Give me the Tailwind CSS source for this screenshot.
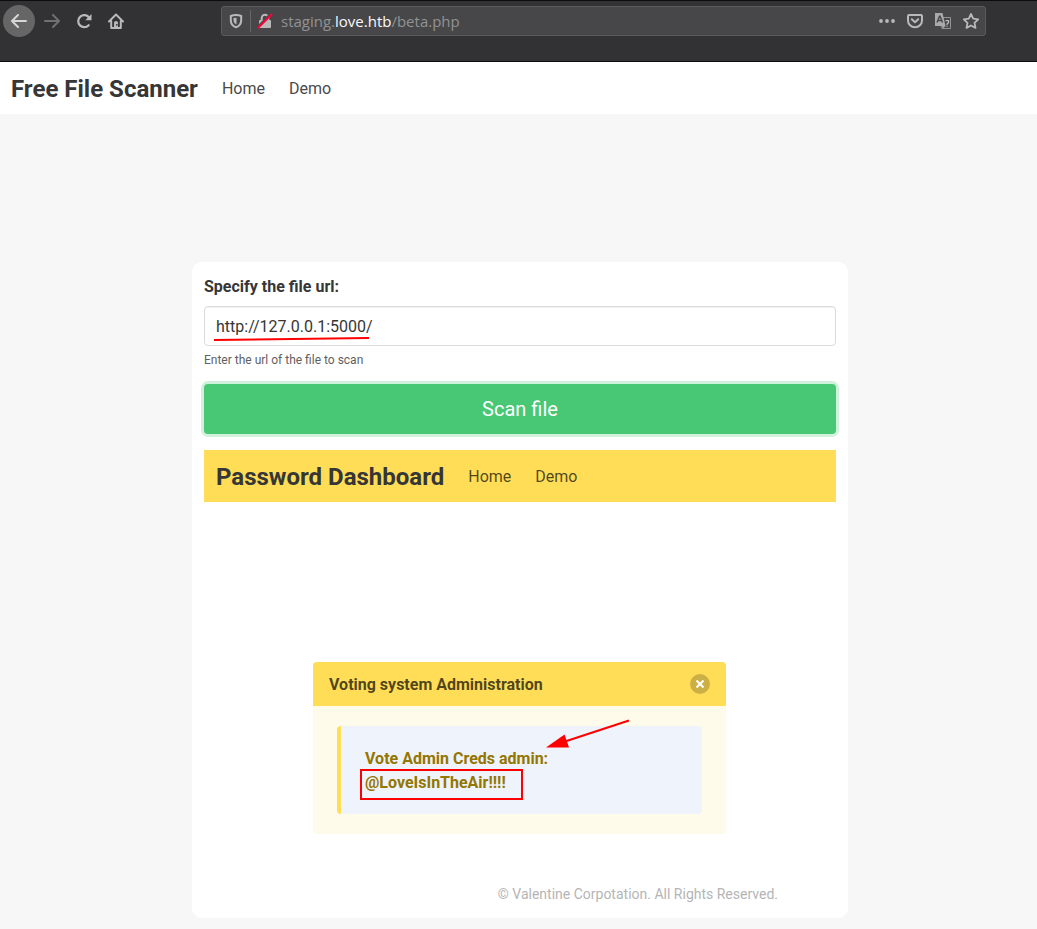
<!DOCTYPE html>
<html lang="en">
<head>
<meta charset="utf-8">
<meta name="viewport" content="width=device-width, initial-scale=1">
<title>Free File Scanner</title>
<script src="https://cdn.jsdelivr.net/npm/@tailwindcss/browser@4"></script>
</head>
<body class="min-h-screen bg-[#f7f7f7] font-['Roboto',sans-serif] text-base text-[#363636]">

<!-- Browser toolbar -->
<div class="flex h-[62px] items-start border-y border-[#0c0c0d] bg-[#323234] pt-1 pr-[51px] pl-[3px] text-[#b9b9ba]">
  <div class="flex w-[218px] shrink-0 items-center">
    <button type="button" aria-label="Back" class="flex size-8 items-center justify-center rounded-full bg-[#666667] text-[#d6d6d6]">
      <svg class="size-4" viewBox="0 0 16 16" fill="none" stroke="currentColor" stroke-width="2" stroke-linecap="round" stroke-linejoin="round"><path d="M15 8H1.500M7 2L1 8l6 6"/></svg>
    </button>
    <button type="button" aria-label="Forward" class="flex size-8 items-center justify-center text-[#707071]">
      <svg class="ml-0.5 size-4 shrink-0" viewBox="0 0 16 16" fill="none" stroke="currentColor" stroke-width="2" stroke-linecap="round" stroke-linejoin="round"><path d="M1 8h13.500M9 2l6 6-6 6"/></svg>
    </button>
    <button type="button" aria-label="Reload" class="flex size-8 items-center justify-center">
      <svg class="ml-0.5 size-4 shrink-0" viewBox="0 0 16 16" fill="none" stroke="currentColor" stroke-width="2.200" stroke-linecap="round"><path d="M12.700 12.200A6 6 0 1 1 13 4.500"/><path d="M15.500 1v6.200H9.300z" fill="currentColor" stroke="none"/></svg>
    </button>
    <button type="button" aria-label="Home page" class="flex size-8 items-center justify-center">
      <svg class="ml-0.5 size-4 shrink-0" viewBox="0 0 16 16" fill="none" stroke="currentColor" stroke-width="2" stroke-linecap="round" stroke-linejoin="round"><path d="M1 8.500L8 1.500l7 7M3.200 8v7h9.600V8"/><path d="M6 15V9.500Q6 8 8 8t2 1.500V15z" stroke="none" fill="currentColor"/><circle cx="8.800" cy="11.800" r=".9" fill="#323234" stroke="none"/></svg>
    </button>
  </div>
  <div class="mt-px flex h-[30px] min-w-0 flex-1 items-center rounded-[3px] border border-[#5b5b5d] bg-[#474749] pr-1.5 pl-1.5">
    <svg class="size-4 shrink-0" viewBox="0 0 16 16" fill="none" stroke="currentColor" stroke-width="2" stroke-linejoin="round"><path d="M8 2C10 2 12 2.500 13.200 3v4.200C13.200 11 11 13.300 8 14.200 5 13.300 2.800 11 2.800 7.200V3C4 2.500 6 2 8 2z"/><path d="M8.500 4.700v6.800C6.600 10.500 5.500 9.200 5.500 7V5z" fill="currentColor" stroke="none"/></svg>
    <span class="mx-1.5 h-[22px] w-px bg-[#666668]"></span>
    <svg class="size-4 shrink-0" viewBox="0 0 16 16" fill="none"><path d="M4.700 7V5a3.300 3.300 0 0 1 6.600 0v2" stroke="#b9b9ba" stroke-width="2"/><rect x="2" y="7" width="12" height="8" rx="1" fill="#b9b9ba"/><path d="M1 13.500L13.500 1" stroke="#474749" stroke-width="2"/><path d="M1.500 14.500L14.500 1.500" stroke="#ff0039" stroke-width="2" stroke-linecap="round"/></svg>
    <p class="ml-2 min-w-0 flex-1 truncate font-['Open_Sans',sans-serif] text-[15px] leading-6 text-[#929293]">staging.<span class="text-[#f9f9fa]">love.htb</span>/beta.php</p>
    <div class="flex shrink-0 items-center gap-3">
      <button type="button" aria-label="Page actions"><svg class="size-4" viewBox="0 0 16 16" fill="currentColor"><circle cx="2" cy="8" r="1.900"/><circle cx="8" cy="8" r="1.900"/><circle cx="14" cy="8" r="1.900"/></svg></button>
      <button type="button" aria-label="Save to Pocket"><svg class="size-4" viewBox="0 0 16 16" fill="none" stroke="currentColor" stroke-width="2" stroke-linecap="round" stroke-linejoin="round"><path d="M2 2h12q1 0 1 1v4.500a7 6.800 0 0 1-14 0V3q0-1 1-1z"/><path d="M4.800 6.300L8 9.300l3.200-3"/></svg></button>
      <button type="button" aria-label="Translate"><svg class="size-4" viewBox="0 0 16 16" fill="none"><path d="M8 4.500h7.500v11H7l-1-3" stroke="#939395"/><path d="M0 0h7.500L10.500 13H0z" fill="#a9a9aa"/><path d="M7 13h3.500L8 15.500z" fill="#a9a9aa"/><path d="M2 9.500L4.500 3.200h.6l2.400 6.300M3 7.500h3.800" stroke="#474749" stroke-width="1.400"/><path d="M10.500 7.700h3v2l-1.500 1.300v1m0 .8v1" stroke="#b9b9ba" stroke-width="1.300"/></svg></button>
      <button type="button" aria-label="Bookmark"><svg class="size-4" viewBox="0 0 16 16" fill="none" stroke="currentColor" stroke-width="1.800" stroke-linejoin="round"><path d="M8 1l2.200 4.700 5 .6-3.700 3.500 1 5.100L8 12.500l-4.500 2.400 1-5.100L.8 6.300l5-.6z"/></svg></button>
    </div>
  </div>
</div>

<nav class="flex h-[52px] items-center bg-white pt-0.5 pl-[11px]" aria-label="Main">
  <a href="#" class="pr-3 text-2xl font-bold">Free File Scanner</a>
  <a href="#" class="px-3 text-[#4a4a4a]">Home</a>
  <a href="#" class="px-3 text-[#4a4a4a]">Demo</a>
</nav>

<main class="pt-[148px] pb-[11px] pl-[3px]">
  <section class="mx-auto max-w-[656px] rounded-[10px] bg-white p-3">
    <form>
      <label for="file-url" class="mb-[7px] block pt-px font-bold">Specify the file url:</label>
      <div class="relative">
        <input id="file-url" type="text" value="http://127.0.0.1:5000/" class="block h-10 w-full rounded border border-[#dbdbdb] bg-white px-[11px] text-[#363636] inset-shadow-2xs outline-none">
        <svg class="pointer-events-none absolute top-[30px] left-[9px] h-1.5 w-40" viewBox="0 0 160 6" fill="none"><path d="M1 4L156 2" stroke="#f00" stroke-width="2"/></svg>
      </div>
      <p class="mt-[5px] mb-[15px] text-xs leading-[18px] text-[#5f5f5f]">Enter the url of the file to scan</p>
      <button type="button" class="block h-[50px] w-full rounded bg-[#48c774] text-xl text-white ring-3 ring-[#48c774]/25">Scan file</button>
    </form>

    <nav class="mt-4 flex h-[52px] items-center bg-[#ffdd57] pt-0.5 pl-3" aria-label="Dashboard">
      <a href="#" class="pr-3 text-2xl font-bold">Password Dashboard</a>
      <a href="#" class="px-3 text-black/70">Home</a>
      <a href="#" class="px-3 text-black/70">Demo</a>
    </nav>

    <article class="mt-40 mr-[110px] ml-[109px] rounded bg-[#fffbeb]">
      <header class="flex h-11 items-center justify-between rounded-t bg-[#ffdd57] px-4 font-bold text-black/70">
        <h2 class="pt-0.5">Voting system Administration</h2>
        <button type="button" aria-label="Close" class="flex size-5 items-center justify-center rounded-full bg-black/20 text-white">
          <svg class="size-2" viewBox="0 0 8 8" fill="none" stroke="currentColor" stroke-width="2"><path d="M.5.500l7 7M7.500.500l-7 7"/></svg>
        </button>
      </header>
      <div class="px-6 py-5">
        <div class="relative rounded border-l-4 border-[#ffdd57] bg-[#eef3fc] px-6 pt-[21px] pb-[19px] leading-6 font-bold text-[#947600]">
          <p>Vote Admin Creds admin:</p>
          <p>@LoveIsInTheAir!!!!</p>
          <div class="pointer-events-none absolute top-[43px] left-[19px] h-[31px] w-[163px] border-2 border-[#f00]"></div>
          <svg class="pointer-events-none absolute -top-2 left-[204px] h-8 w-[86px]" viewBox="0 0 86 32"><path d="M84 2.500L20 23.500" stroke="#f00" stroke-width="2"/><path d="M1 29.500L19.500 16.500 24 29.500z" fill="#f00"/></svg>
        </div>
      </div>
    </article>

    <p class="mt-12 mr-[58px] text-right text-sm leading-6 text-[#b5b5b5]">© Valentine Corpotation. All Rights Reserved.</p>
  </section>
</main>
</body>
</html>
